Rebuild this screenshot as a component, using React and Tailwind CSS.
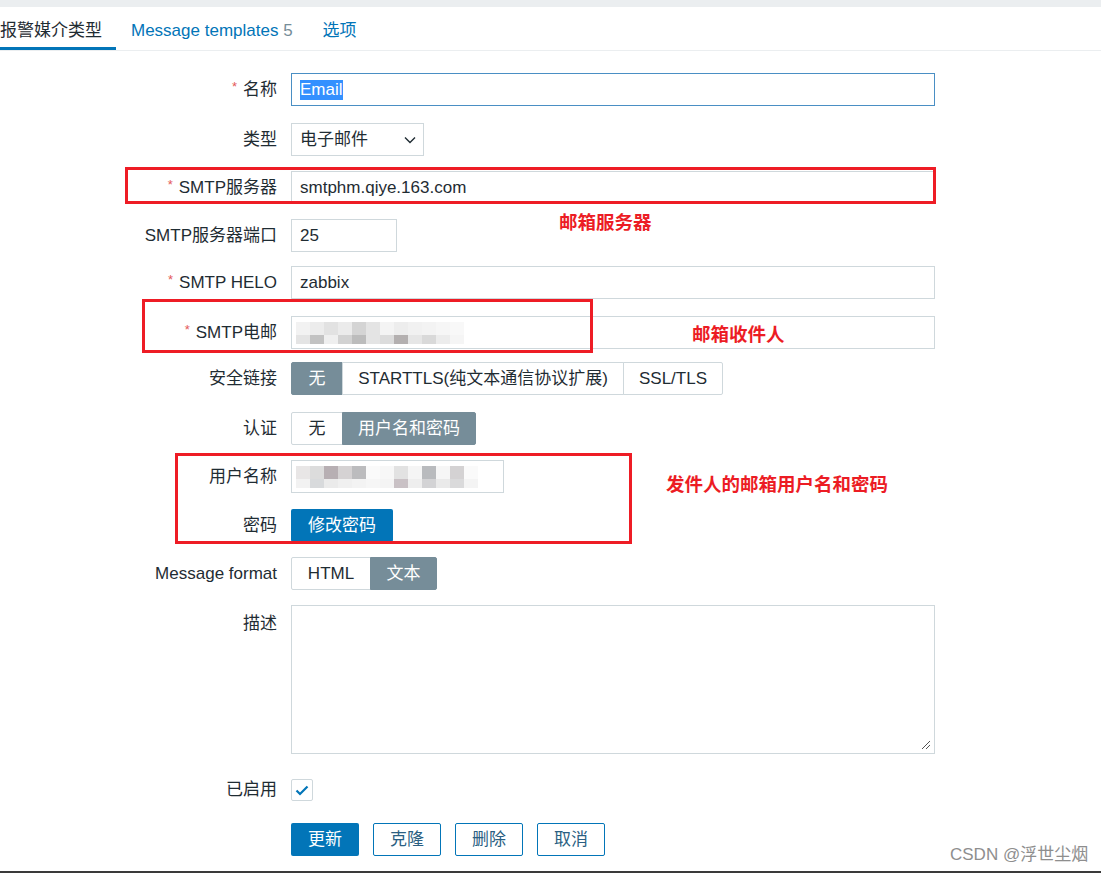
import React from "react";

const FONT = { fontFamily: '"Liberation Sans", Arial, "Noto Sans CJK SC", sans-serif' };

function Label({ children, required, top }) {
  return (
    <div
      className={
        "w-[277px] shrink-0 flex justify-end text-[17px] text-[#1f2c33] " +
        (top ? "items-start pt-[6px]" : "items-center h-[33px]")
      }
    >
      {required && <span className="text-[#e45959] text-[13px] mr-[6px] relative top-[-3px]">*</span>}
      <span>{children}</span>
    </div>
  );
}

function Row({ label, required, top, className, children }) {
  return (
    <div className={"flex gap-[14px] " + (className || "")}>
      <Label required={required} top={top}>
        {label}
      </Label>
      <div className="flex items-center">{children}</div>
    </div>
  );
}

function TextBox({ value, w, children, focused }) {
  return (
    <div
      className={
        "h-[33px] bg-white flex items-center pl-[8px] text-[17px] text-[#1f2c33] border " +
        (focused ? "border-[#4a8fc4]" : "border-[#cfd8dc]") +
        " " +
        w
      }
    >
      {value}
      {children}
    </div>
  );
}

function Pixels({ rows, cell, rowH }) {
  return (
    <div className="flex flex-col">
      {rows.map((r, i) => (
        <div key={i} className="flex">
          {r.map((c, j) => (
            <div key={j} className={c + " " + cell + " " + rowH[i]} />
          ))}
        </div>
      ))}
    </div>
  );
}

function Seg({ items }) {
  return (
    <div className="flex h-[33px] text-[17px]">
      {items.map((it, i) => (
        <div
          key={i}
          className={
            "flex items-center justify-center h-full border " +
            it.w +
            " " +
            (it.active
              ? "bg-[#768d99] border-[#768d99] text-white"
              : "bg-white border-[#cfd8dc] text-[#1f2c33]") +
            (i > 0 ? " -ml-px" : "") +
            (i === 0 ? " rounded-l-[2px]" : "") +
            (i === items.length - 1 ? " rounded-r-[2px]" : "")
          }
        >
          {it.t}
        </div>
      ))}
    </div>
  );
}

function OutlineBtn({ children }) {
  return (
    <div className="w-[68px] h-[33px] flex items-center justify-center border border-[#0275b8] rounded-[2px] text-[17px] text-[#2b5f82] bg-white">
      {children}
    </div>
  );
}

export default function App() {
  return (
    <div className="relative w-[1101px] h-[873px] overflow-hidden bg-white" style={FONT}>
      <div className="h-[7px] bg-[#ebeef0]" />
      <div className="h-[44px] border-b border-[#ebeef0] flex ml-[-15px]">
        <div className="pl-[15px] pr-[14px] pt-[14px] leading-[20px] text-[17px] text-[#1f2c33] border-b-[3px] border-[#0275b8] h-[43px]">
          报警媒介类型
        </div>
        <div className="px-[15px] pt-[14px] leading-[20px] text-[17px] text-[#0275b8] h-[43px]">
          Message templates <span className="text-[#768d99]">5</span>
        </div>
        <div className="px-[15px] pt-[14px] leading-[20px] text-[17px] text-[#0275b8] h-[43px]">选项</div>
      </div>

      <div className="flex flex-col mt-[22px]">
        <Row label="名称" required>
          <TextBox w="w-[644px]" focused>
            <span className="bg-[#3390ff] text-white leading-[20px]">Email</span>
          </TextBox>
        </Row>
        <Row label="类型" className="mt-[17px]">
          <div className="w-[133px] h-[33px] border border-[#cfd8dc] flex items-center justify-between pl-[8px] pr-[7px] text-[17px] text-[#1f2c33]">
            <span>电子邮件</span>
            <svg width="12" height="8" viewBox="0 0 12 8">
              <polyline points="1,1.5 6,6.5 11,1.5" fill="none" stroke="#1f2c33" strokeWidth="1.4" />
            </svg>
          </div>
        </Row>
        <Row label="SMTP服务器" required className="mt-[15px]">
          <TextBox w="w-[644px]" value="smtphm.qiye.163.com" />
        </Row>
        <Row label="SMTP服务器端口" className="mt-[15px]">
          <TextBox w="w-[106px]" value="25" />
        </Row>
        <Row label="SMTP HELO" required className="mt-[14px]">
          <TextBox w="w-[644px]" value="zabbix" />
        </Row>
        <Row label="SMTP电邮" required className="mt-[17px]">
          <TextBox w="w-[644px]">
            <div className="ml-[-4px]">
              <Pixels
                cell="w-[14px]"
                rowH={["h-[13px]", "h-[9px]"]}
                rows={[
                  ["bg-[#f2f2f2]", "bg-[#ececec]", "bg-[#e2e2e2]", "bg-[#ebebeb]", "bg-[#d4d4d4]", "bg-[#e4e4e4]", "bg-[#f4f4f4]", "bg-[#ededed]", "bg-[#f1f1f1]", "bg-[#f3f3f3]", "bg-[#f6f6f6]", "bg-[#f8f8f8]"],
                  ["bg-[#e4e4e4]", "bg-[#c2c2c2]", "bg-[#efefef]", "bg-[#d2d2d2]", "bg-[#bcbcbc]", "bg-[#e4e4e4]", "bg-[#dcdcdc]", "bg-[#b4b0b0]", "bg-[#e6e6e6]", "bg-[#d9d9d9]", "bg-[#ececec]", "bg-[#f5f5f5]"],
                ]}
              />
            </div>
          </TextBox>
        </Row>
        <Row label="安全链接" className="mt-[13px]">
          <Seg
            items={[
              { t: "无", w: "w-[52px]", active: true },
              { t: "STARTTLS(纯文本通信协议扩展)", w: "w-[282px]" },
              { t: "SSL/TLS", w: "w-[100px]" },
            ]}
          />
        </Row>
        <Row label="认证" className="mt-[17px]">
          <Seg
            items={[
              { t: "无", w: "w-[52px]" },
              { t: "用户名和密码", w: "w-[134px]", active: true },
            ]}
          />
        </Row>
        <Row label="用户名称" className="mt-[15px]">
          <TextBox w="w-[213px]">
            <div className="ml-[-4px]">
              <Pixels
                cell="w-[14px]"
                rowH={["h-[13px]", "h-[9px]"]}
                rows={[
                  ["bg-[#e8e6e6]", "bg-[#dcdcdc]", "bg-[#b7afb3]", "bg-[#d5d2d3]", "bg-[#bcbcbe]", "bg-[#fafafa]", "bg-[#f7f7f7]", "bg-[#e2e2e2]", "bg-[#f5f5f5]", "bg-[#b9bbbe]", "bg-[#f6f6f6]", "bg-[#d4d2d3]", "bg-[#fafafa]"],
                  ["bg-[#f2f2f2]", "bg-[#d8dadc]", "bg-[#ebebeb]", "bg-[#f0f0f0]", "bg-[#f3f3f3]", "bg-[#f6f6f6]", "bg-[#f4f4f4]", "bg-[#c9c1c5]", "bg-[#eeeeee]", "bg-[#d3d3d5]", "bg-[#eaeaea]", "bg-[#dadadb]", "bg-[#f4f4f4]"],
                ]}
              />
            </div>
          </TextBox>
        </Row>
        <Row label="密码" className="mt-[16px]">
          <div className="w-[102px] h-[33px] flex items-center justify-center bg-[#0275b8] rounded-[2px] text-[17px] text-white">
            修改密码
          </div>
        </Row>
        <Row label="Message format" className="mt-[15px]">
          <Seg
            items={[
              { t: "HTML", w: "w-[80px]" },
              { t: "文本", w: "w-[67px]", active: true },
            ]}
          />
        </Row>
        <Row label="描述" top className="mt-[15px]">
          <div className="relative w-[644px] h-[149px] border border-[#cfd8dc] bg-white">
            <svg className="absolute right-[3px] bottom-[3px]" width="10" height="10" viewBox="0 0 10 10">
              <line x1="9" y1="1" x2="1" y2="9" stroke="#555" strokeWidth="1" />
              <line x1="9" y1="5" x2="5" y2="9" stroke="#555" strokeWidth="1" />
            </svg>
          </div>
        </Row>
        <div className="flex gap-[14px] mt-[25px]">
          <div className="w-[277px] h-[22px] flex items-center justify-end text-[17px] text-[#1f2c33]">已启用</div>
          <div className="w-[22px] h-[22px] border border-[#cfd8dc] rounded-[2px] flex items-center justify-center bg-white">
            <svg width="14" height="11" viewBox="0 0 14 11">
              <polyline points="1.5,5.5 5,9 12.5,1.5" fill="none" stroke="#0275b8" strokeWidth="2.2" />
            </svg>
          </div>
        </div>
        <div className="flex gap-[14px] mt-[22px] ml-[291px]">
          <div className="w-[68px] h-[33px] flex items-center justify-center bg-[#0275b8] rounded-[2px] text-[17px] text-white">
            更新
          </div>
          <OutlineBtn>克隆</OutlineBtn>
          <OutlineBtn>删除</OutlineBtn>
          <OutlineBtn>取消</OutlineBtn>
        </div>
      </div>

      {/* annotations */}
      <div className="absolute left-[125px] top-[167px] w-[811px] h-[37px] border-[3px] border-[#ee1c25]" />
      <div className="absolute left-[142px] top-[299px] w-[451px] h-[54px] border-[3px] border-[#ee1c25]" />
      <div className="absolute left-[175px] top-[453px] w-[457px] h-[91px] border-[3px] border-[#ee1c25]" />
      <div className="absolute left-[559px] top-[212px] text-[18.5px] leading-[22px] font-bold text-[#ec1c24]">邮箱服务器</div>
      <div className="absolute left-[692px] top-[324px] text-[18.5px] leading-[22px] font-bold text-[#ec1c24]">邮箱收件人</div>
      <div className="absolute left-[666px] top-[474px] text-[18.5px] leading-[22px] font-bold text-[#ec1c24]">
        发件人的邮箱用户名和密码
      </div>
      <div className="absolute left-[950px] top-[844px] text-[17px] leading-[22px] text-[#8e8e8e]">CSDN @浮世尘烟</div>
      <div className="absolute left-0 bottom-0 w-full h-[2px] bg-[#3a3a3a]" />
    </div>
  );
}
